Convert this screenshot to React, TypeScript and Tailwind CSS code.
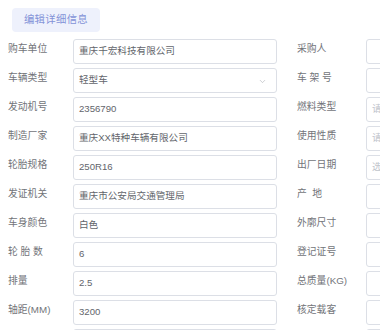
import * as React from "react";
import { ChevronDown } from "lucide-react";

type Field = { label: string; value?: string; placeholder?: string; select?: boolean };

const left: Field[] = [
  { label: "购车单位", value: "重庆千宏科技有限公司" },
  { label: "车辆类型", value: "轻型车", select: true },
  { label: "发动机号", value: "2356790" },
  { label: "制造厂家", value: "重庆XX特种车辆有限公司" },
  { label: "轮胎规格", value: "250R16" },
  { label: "发证机关", value: "重庆市公安局交通管理局" },
  { label: "车身颜色", value: "白色" },
  { label: "轮 胎 数", value: "6" },
  { label: "排量", value: "2.5" },
  { label: "轴距(MM)", value: "3200" },
  { label: "", value: "" },
];

const right: Field[] = [
  { label: "采购人" },
  { label: "车 架 号" },
  { label: "燃料类型", placeholder: "请选择燃料类型" },
  { label: "使用性质", placeholder: "请选择使用性质" },
  { label: "出厂日期", placeholder: "选择日期" },
  { label: "产  地" },
  { label: "外廓尺寸" },
  { label: "登记证号" },
  { label: "总质量(KG)" },
  { label: "核定载客" },
  { label: "" },
];

function Input({ field }: { field: Field }) {
  return (
    <div className="relative flex h-[25px] w-[204px] shrink-0 items-center rounded-[3px] border border-[#dcdfe6] bg-white px-[5px] text-[9.6px] text-[#62656b]">
      {field.value ? (
        <span className="whitespace-nowrap">{field.value}</span>
      ) : field.placeholder ? (
        <span className="whitespace-nowrap text-[#c0c4cc]">{field.placeholder}</span>
      ) : null}
      {field.select && <ChevronDown className="absolute right-[9px] top-[8px] size-[9px] text-[#a8abb2]" strokeWidth={1.5} />}
    </div>
  );
}

function Row({ field, labelWidth }: { field: Field; labelWidth: string }) {
  return (
    <div className="flex items-start">
      <div className={`${labelWidth} h-[17px] shrink-0 whitespace-pre pt-[1px] text-[9.8px] leading-[17px] text-[#727479]`}>{field.label}</div>
      <Input field={field} />
    </div>
  );
}

export default function App() {
  return (
    <div
      className="h-[330px] w-[380px] overflow-hidden bg-white"
      style={{ fontFamily: '"Liberation Sans", "Noto Sans CJK SC", sans-serif' }}
    >
      <div className="pl-[12px] pt-[6px]">
        <button className="h-[24px] w-[88px] rounded-[4px] bg-[#eef1fc] text-[10.4px] tracking-[0.3px] text-[#8493d8]">编辑详细信息</button>
      </div>
      <div className="flex gap-[20px] pl-[8px] pt-[7px]">
        <div className="flex flex-col gap-[4px]">
          {left.map((f, i) => (
            <Row key={i} field={f} labelWidth="w-[65px]" />
          ))}
        </div>
        <div className="flex flex-col gap-[4px]">
          {right.map((f, i) => (
            <Row key={i} field={f} labelWidth="w-[69px]" />
          ))}
        </div>
      </div>
    </div>
  );
}
